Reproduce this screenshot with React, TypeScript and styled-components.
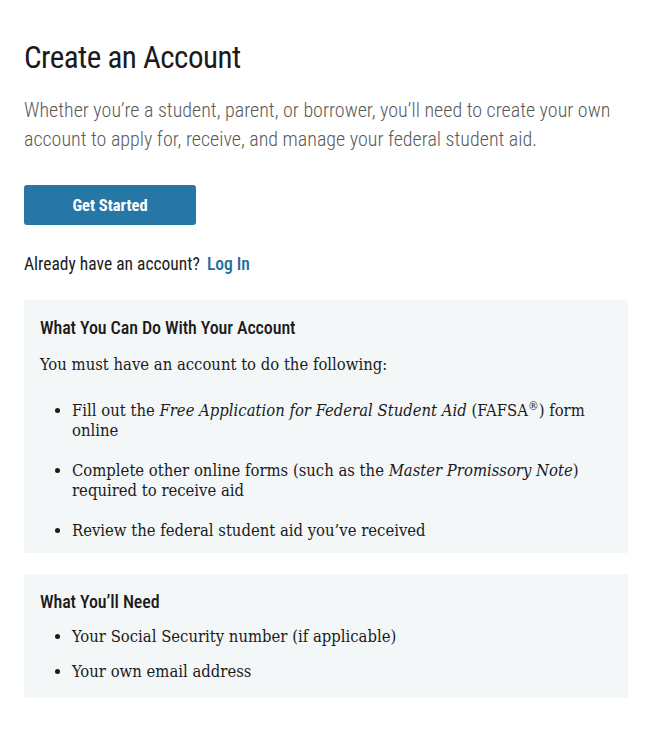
import React from 'react';
import styled, { createGlobalStyle } from 'styled-components';

const GlobalStyle = createGlobalStyle`
  html, body {
    margin: 0;
    padding: 0;
    background: #ffffff;
  }
  body {
    font-family: 'DejaVu Serif Condensed', 'DejaVu Serif', serif;
    -webkit-font-smoothing: antialiased;
  }
`;

const sans = `'Roboto Condensed', 'Open Sans', sans-serif`;

const Page = styled.main`
  padding: 40px 28px 30px 24px;
`;

const Title = styled.h1`
  font-family: ${sans};
  font-size: 31px;
  font-weight: 400;
  letter-spacing: -0.5px;
  line-height: 36px;
  color: #1b1b1b;
  margin: 0 0 20px 0;
`;

const Lead = styled.p`
  font-family: ${sans};
  font-size: 20px;
  font-weight: 300;
  line-height: 29px;
  color: #5a5a5a;
  margin: 0 0 31px 0;
`;

const PrimaryButton = styled.button`
  display: flex;
  align-items: center;
  justify-content: center;
  width: 172px;
  height: 40px;
  padding: 0;
  border: none;
  border-radius: 3px;
  background: #2677a5;
  color: #ffffff;
  font-family: ${sans};
  font-size: 16.5px;
  font-weight: 700;
  cursor: pointer;
  margin-bottom: 27px;
`;

const LoginLine = styled.p`
  font-family: ${sans};
  font-size: 17.5px;
  line-height: 24px;
  color: #1b1b1b;
  margin: 0 0 24px 0;
`;

const LoginLink = styled.a`
  color: #1d6c9c;
  font-weight: 500;
  text-decoration: none;
  margin-left: 7px;
`;

const InfoCard = styled.section<{ $bottom: number }>`
  background: #f4f7f8;
  padding: 16px 16px ${(p) => p.$bottom}px 16px;
  margin-bottom: 21px;
`;

const CardTitle = styled.h2<{ $gap: number }>`
  font-family: ${sans};
  font-size: 18px;
  font-weight: 500;
  letter-spacing: -0.1px;
  line-height: 24px;
  color: #1b1b1b;
  margin: 0 0 ${(p) => p.$gap}px 0;
`;

const CardText = styled.p`
  font-size: 16.5px;
  line-height: 24px;
  color: #1b1b1b;
  margin: 0 0 24px 0;
`;

const BulletList = styled.ul`
  margin: 0;
  padding-left: 32px;
  font-size: 16.5px;
  line-height: 20px;
  color: #1b1b1b;

  sup {
    font-size: 0.72em;
    line-height: 0;
  }
`;

const Bullet = styled.li<{ $spacing: number }>`
  margin-bottom: ${(p) => p.$spacing}px;
  &:last-child {
    margin-bottom: 0;
  }
`;

export default function App() {
  return (
    <>
      <GlobalStyle />
      <Page>
        <Title>Create an Account</Title>
        <Lead>
          Whether you’re a student, parent, or borrower, you’ll need to create your own
          account to apply for, receive, and manage your federal student aid.
        </Lead>
        <PrimaryButton>Get Started</PrimaryButton>
        <LoginLine>
          Already have an account?<LoginLink href="#">Log In</LoginLink>
        </LoginLine>

        <InfoCard $bottom={12}>
          <CardTitle $gap={13}>What You Can Do With Your Account</CardTitle>
          <CardText>You must have an account to do the following:</CardText>
          <BulletList>
            <Bullet $spacing={20}>
              Fill out the <em>Free Application for Federal Student Aid</em> (FAFSA<sup>®</sup>) form
              online
            </Bullet>
            <Bullet $spacing={20}>
              Complete other online forms (such as the <em>Master Promissory Note</em>) required
              to receive aid
            </Bullet>
            <Bullet $spacing={20}>Review the federal student aid you’ve received</Bullet>
          </BulletList>
        </InfoCard>

        <InfoCard $bottom={16}>
          <CardTitle $gap={13}>What You’ll Need</CardTitle>
          <BulletList>
            <Bullet $spacing={15}>Your Social Security number (if applicable)</Bullet>
            <Bullet $spacing={15}>Your own email address</Bullet>
          </BulletList>
        </InfoCard>
      </Page>
    </>
  );
}
